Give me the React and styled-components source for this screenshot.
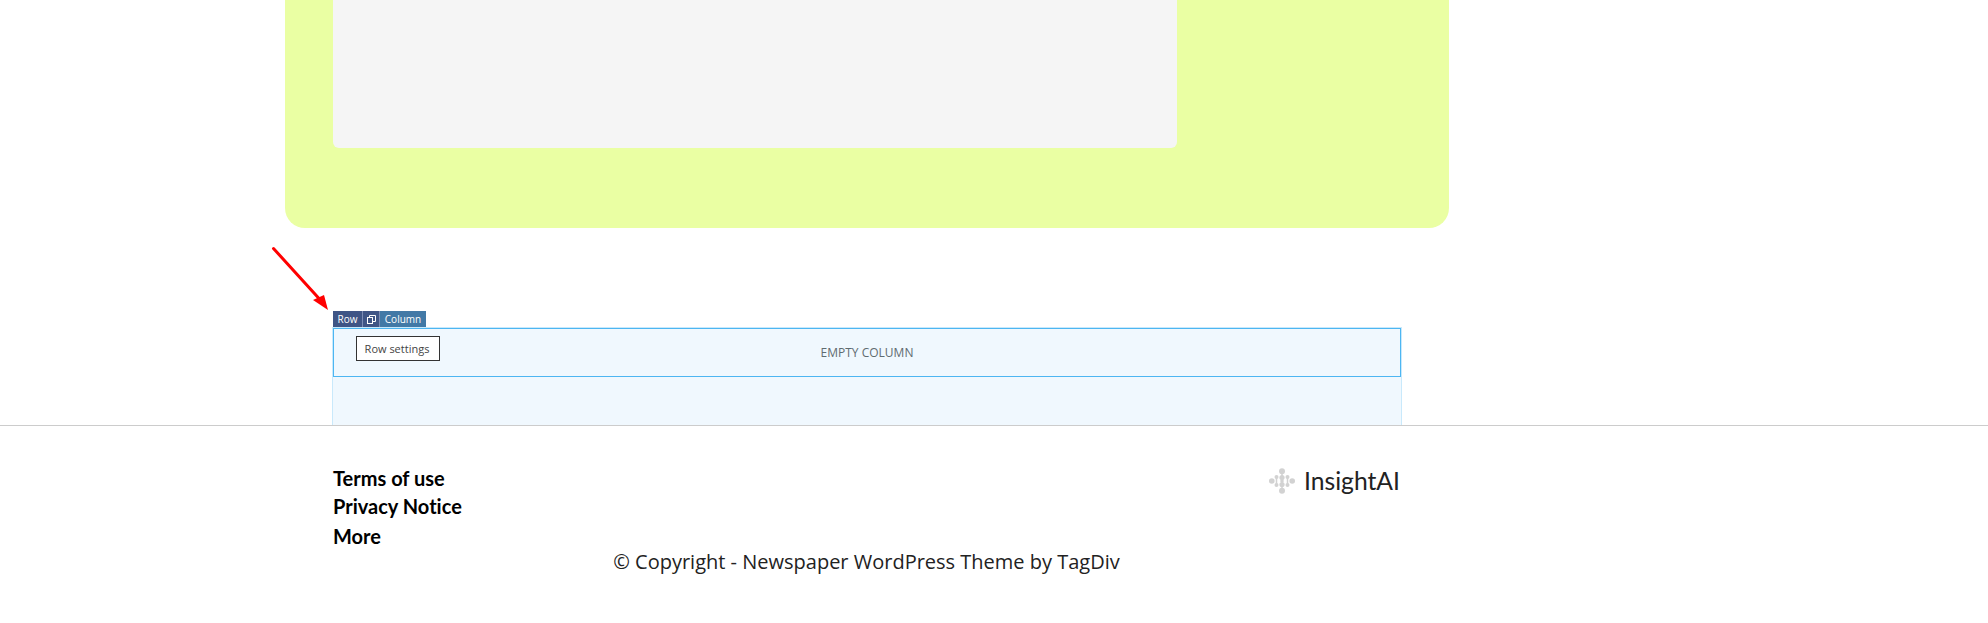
import React from 'react';
import styled, { createGlobalStyle } from 'styled-components';

const GlobalStyle = createGlobalStyle`
  html, body {
    margin: 0;
    padding: 0;
    background: #fff;
    font-family: "Open Sans", sans-serif;
  }
`;

const Page = styled.div`
  position: relative;
  width: 1988px;
  height: 623px;
  overflow: hidden;
`;

const HeroPanel = styled.section`
  box-sizing: border-box;
  margin-left: 285px;
  width: 1164px;
  height: 228px;
  padding: 0 272px 80px 48px;
  background: #eaffa3;
  border-radius: 0 0 20px 20px;
`;

const HeroPlaceholder = styled.div`
  height: 148px;
  background: #f5f5f5;
  border-radius: 0 0 6px 6px;
`;

const Editor = styled.section`
  margin: 83px 0 0 333px;
  width: 1069px;
`;

const Toolbar = styled.div`
  display: flex;
  height: 16px;
  font-size: 10px;
  font-weight: 500;
  line-height: 16px;
  color: #fff;
`;

const ToolbarButton = styled.div`
  display: flex;
  align-items: center;
  justify-content: center;
  box-sizing: border-box;
  width: ${(p) => p.$width}px;
  background: ${(p) => p.$bg};
  border-right: ${(p) => (p.$divider ? '1px solid #7d8db5' : 'none')};
`;

const RowBlock = styled.div`
  position: relative;
  box-sizing: border-box;
  height: 98px;
  margin-left: -1px;
  background: #f0f8fe;
  border: 1px solid #c9e9fb;
  border-bottom: none;
`;

const ColumnBlock = styled.div`
  box-sizing: border-box;
  height: 49px;
  display: flex;
  align-items: center;
  justify-content: center;
  border: 1px solid #4db6f2;
  font-size: 12px;
  color: #5f6b70;
`;

const Tooltip = styled.div`
  position: absolute;
  left: 23px;
  top: 8px;
  box-sizing: border-box;
  width: 84px;
  height: 25px;
  display: flex;
  align-items: center;
  justify-content: center;
  padding-right: 2px;
  background: #fff;
  border: 1px solid #333;
  font-size: 11px;
  color: #444;
`;

const Arrow = styled.svg`
  position: absolute;
  left: 268px;
  top: 242px;
`;

const Footer = styled.footer`
  border-top: 1px solid #ccc;
  padding-top: 38px;
`;

const FooterInner = styled.div`
  margin-left: 333px;
  width: 1069px;
`;

const FooterTop = styled.div`
  display: flex;
  justify-content: space-between;
  align-items: flex-start;
  height: 84px;
`;

const FooterLinks = styled.nav`
  display: flex;
  flex-direction: column;
`;

const FooterLink = styled.a`
  font-family: Lato, sans-serif;
  font-size: 20px;
  font-weight: 700;
  font-variant-ligatures: none;
  line-height: ${(p) => p.$height}px;
  color: #000;
`;

const Brand = styled.div`
  display: flex;
  align-items: center;
  gap: 9px;
  margin: 2px 2px 0 0;
  font-family: Lato, sans-serif;
  font-size: 24.7px;
  line-height: 30px;
  color: #222;
`;

const Copyright = styled.div`
  padding-right: 2px;
  text-align: center;
  font-size: 20px;
  line-height: 28px;
  color: #222;
`;

function App() {
  return (
    <Page>
      <GlobalStyle />
      <HeroPanel>
        <HeroPlaceholder />
      </HeroPanel>

      <Editor>
        <Toolbar>
          <ToolbarButton $width={30} $bg="#3f5586" $divider>Row</ToolbarButton>
          <ToolbarButton $width={17} $bg="#3f5586" $divider>
            <svg width="11" height="11" viewBox="0 0 11 11" fill="none" stroke="#fff" strokeWidth="1">
              <rect x="1.5" y="3.5" width="5" height="6" />
              <path d="M3.5 3.5V1.5H9.5V7.5H6.5" />
            </svg>
          </ToolbarButton>
          <ToolbarButton $width={46} $bg="#4279a6">Column</ToolbarButton>
        </Toolbar>
        <RowBlock>
          <ColumnBlock>EMPTY COLUMN</ColumnBlock>
          <Tooltip>Row settings</Tooltip>
        </RowBlock>
      </Editor>

      <Footer>
        <FooterInner>
          <FooterTop>
            <FooterLinks>
              <FooterLink $height={28}>Terms of use</FooterLink>
              <FooterLink $height={28}>Privacy Notice</FooterLink>
              <FooterLink $height={33}>More</FooterLink>
            </FooterLinks>
            <Brand>
              <svg width="26" height="26" viewBox="0 0 26 26" fill="#d2d2d2" stroke="none">
                <path d="M13 3V23M7.5 9V17M18.5 9V17" stroke="#d2d2d2" strokeWidth="1.5" />
                <circle cx="13" cy="3.2" r="3" />
                <circle cx="13" cy="22.8" r="3" />
                <circle cx="13" cy="9.5" r="2.6" />
                <circle cx="13" cy="16.5" r="2.6" />
                <circle cx="13" cy="13" r="1.8" />
                <circle cx="2.8" cy="13" r="2.8" />
                <circle cx="23.2" cy="13" r="2.8" />
                <circle cx="7.5" cy="9" r="2" />
                <circle cx="18.5" cy="9" r="2" />
                <circle cx="7.5" cy="17" r="2" />
                <circle cx="18.5" cy="17" r="2" />
              </svg>
              InsightAI
            </Brand>
          </FooterTop>
          <Copyright>© Copyright - Newspaper WordPress Theme by TagDiv</Copyright>
        </FooterInner>
      </Footer>

      <Arrow width="64" height="72" viewBox="0 0 64 72">
        <path d="M5.5 6.5L51 56.5" stroke="#f00" strokeWidth="3" strokeLinecap="round" />
        <path d="M60 68L45 58L56 53Z" fill="#f00" />
      </Arrow>
    </Page>
  );
}

export default App;
